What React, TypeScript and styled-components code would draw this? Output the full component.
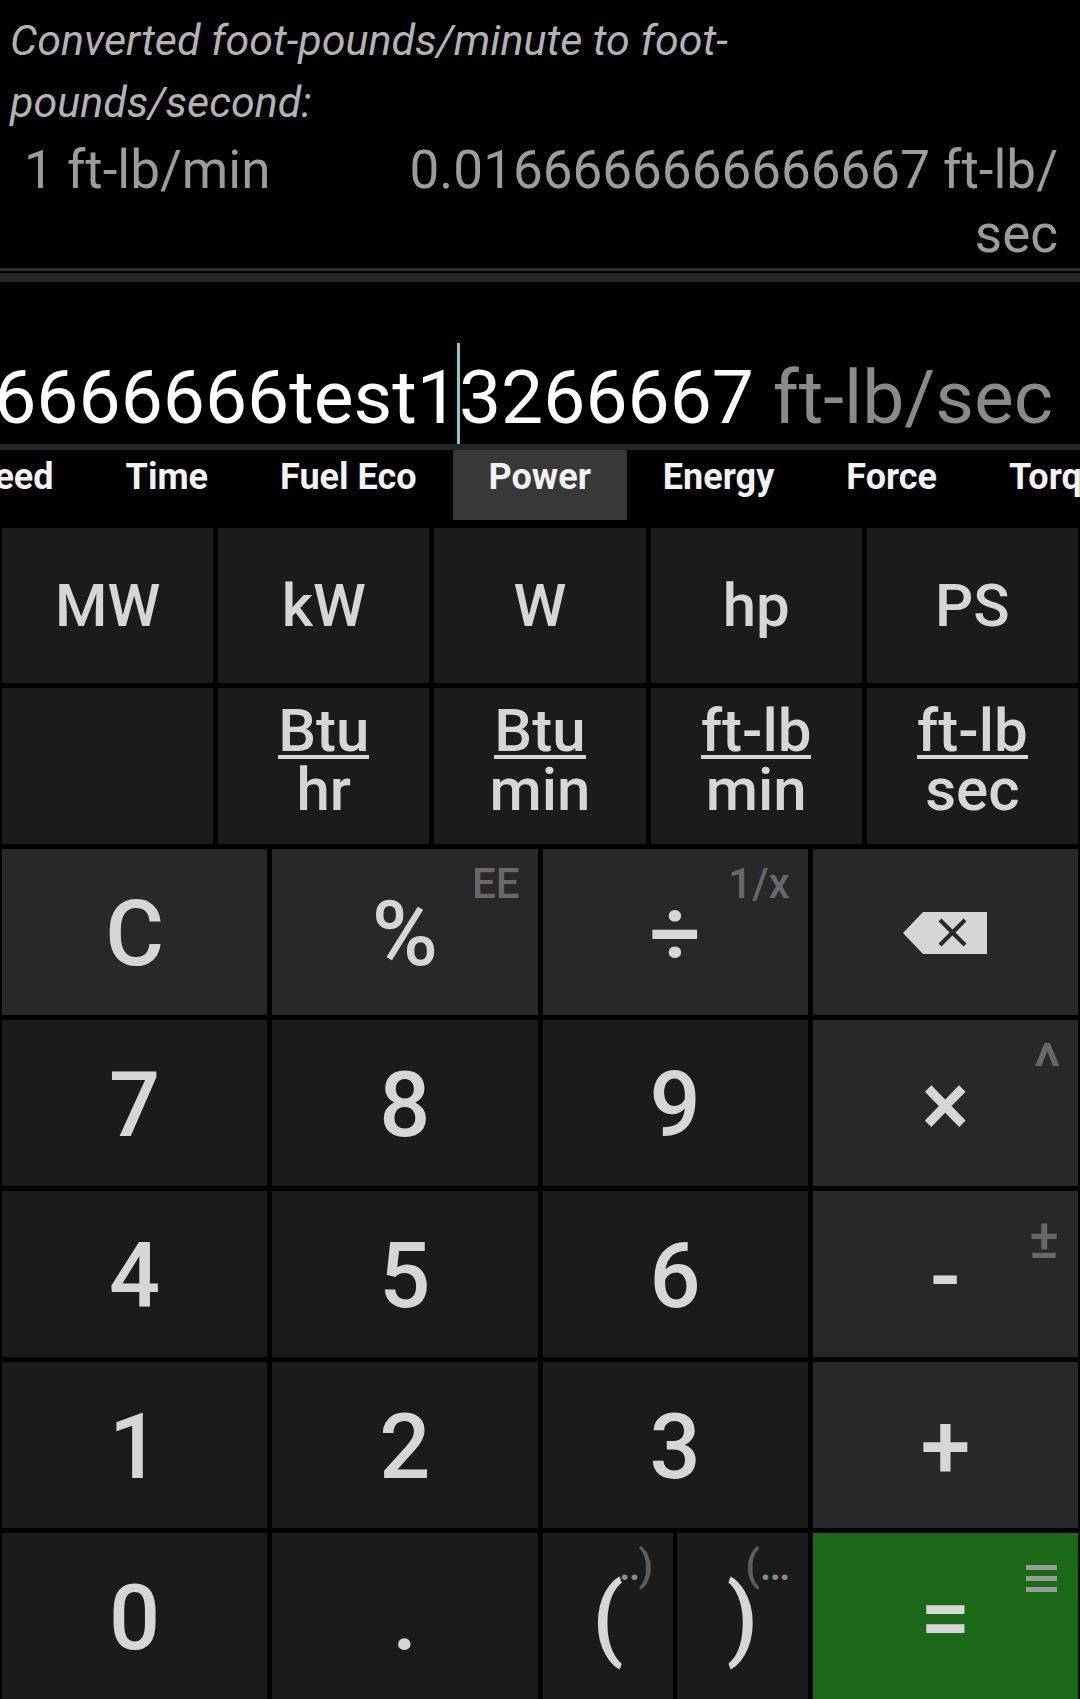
import React, { FC, ReactNode } from 'react'
import styled, { createGlobalStyle } from 'styled-components'

const GlobalStyle = createGlobalStyle`
  html, body {
    margin: 0;
    padding: 0;
    background: #000;
  }
  body {
    font-family: Roboto, "Liberation Sans", sans-serif;
  }
`

const Screen = styled.div`
  width: 1080px;
  height: 1699px;
  display: flex;
  flex-direction: column;
  background: #000;
  overflow: hidden;
`

const History = styled.div`
  padding: 9px 22px 0 10px;
  height: 266px;
  box-sizing: border-box;
`

const Title = styled.div`
  font-style: italic;
  font-size: 43px;
  line-height: 62px;
  color: #b3b3b3;
`

const ResultRow = styled.div`
  display: flex;
  margin-top: 5px;
  font-size: 53px;
  line-height: 64px;
  color: #9c9c9c;
`

const ResultFrom = styled.div`
  padding-left: 14px;
  white-space: nowrap;
`

const ResultTo = styled.div`
  flex: 1;
  text-align: right;
`

const ThinRule = styled.div`
  height: 3px;
  margin-top: 2px;
  background: #2c2c2c;
`

const ThickRule = styled.div<{ $h: number; $top?: number }>`
  height: ${p => p.$h}px;
  margin-top: ${p => p.$top ?? 0}px;
  background: #262626;
  flex-shrink: 0;
`

const InputRow = styled.div`
  height: 162px;
  display: flex;
  justify-content: flex-end;
  align-items: flex-end;
  padding-right: 27px;
  overflow: hidden;
  flex-shrink: 0;
`

const InputText = styled.div`
  flex-shrink: 0;
  white-space: nowrap;
  font-size: 75px;
  line-height: 1;
  color: #fff;
`

const Cursor = styled.span`
  display: inline-block;
  width: 3px;
  height: 101px;
  margin: 0 -1px 0 -2px;
  vertical-align: -21px;
  background: #80cbc4;
`

const InputUnit = styled.span`
  color: #8a8a8a;
`

const TabStrip = styled.div`
  height: 70px;
  overflow: hidden;
  flex-shrink: 0;
`

const TabTrack = styled.div`
  display: flex;
  margin-left: -84px;
`

const Tab = styled.div<{ $active?: boolean }>`
  flex-shrink: 0;
  height: 70px;
  box-sizing: border-box;
  padding: 0 36px 16px;
  line-height: 54px;
  font-size: 36px;
  font-weight: 700;
  color: #f2f2f2;
  white-space: nowrap;
  background: ${p => (p.$active ? '#383838' : 'transparent')};
`

const UnitGrid = styled.div`
  display: grid;
  grid-template-columns: repeat(5, 1fr);
  grid-template-rows: 155px 156px;
  gap: 5px;
  padding: 0 2px;
  margin-top: 8px;
`

const UnitCell = styled.div`
  display: flex;
  align-items: center;
  justify-content: center;
  background: #1b1b1b;
  color: #d6d6d6;
  font-size: 60px;
  font-weight: 500;
`

const Fraction = styled.div`
  display: flex;
  flex-direction: column;
  align-items: center;
  padding-bottom: 12px;
`

const Numerator = styled.span`
  line-height: 49px;
  border-bottom: 4px solid #d6d6d6;
`

const Denominator = styled.span`
  line-height: 49px;
  margin-top: 6px;
`

const Keypad = styled.div`
  display: grid;
  grid-template-columns: repeat(4, 1fr);
  grid-auto-rows: 166px;
  gap: 5px;
  padding: 0 2px;
  margin-top: 5px;
`

const keyBg = {
  digit: '#1b1b1b',
  op: '#282828',
  eq: '#1a6a18',
}

const Key = styled.div<{ $kind: keyof typeof keyBg }>`
  position: relative;
  display: flex;
  align-items: center;
  justify-content: center;
  padding-top: 6px;
  box-sizing: border-box;
  background: ${p => keyBg[p.$kind]};
  color: #d6d6d6;
  font-size: 90px;
  font-weight: 500;
  line-height: 1;

  & > svg {
    margin-top: -4px;
  }
`

const SplitKey = styled.div`
  display: grid;
  grid-template-columns: 1fr 1fr;
  gap: 4px;
`

const Alt = styled.span<{ $color?: string; $top?: number; $right?: number; $size?: number }>`
  position: absolute;
  top: ${p => p.$top ?? 14}px;
  right: ${p => p.$right ?? 18}px;
  font-size: ${p => p.$size ?? 42}px;
  font-weight: 500;
  line-height: 1;
  color: ${p => p.$color ?? '#686868'};

  svg {
    display: block;
  }
`

const Dots = styled.span`
  color: #8a8a8a;
  letter-spacing: -2px;
`

const Backspace: FC = () => (
  <svg width="84" height="42" viewBox="0 0 84 42">
    <path d="M0 21 L20 0 H84 V42 H20 Z" fill="#d6d6d6" />
    <path d="M37 8 L62 33 M62 8 L37 33" stroke="#282828" strokeWidth="4" />
  </svg>
)

const Menu: FC = () => (
  <svg width="31" height="27" viewBox="0 0 31 27">
    <rect x="0" y="0" width="31" height="5" fill="#9a9a9a" />
    <rect x="0" y="11" width="31" height="5" fill="#9a9a9a" />
    <rect x="0" y="22" width="31" height="5" fill="#9a9a9a" />
  </svg>
)

type KeyDef = {
  label: ReactNode
  kind: keyof typeof keyBg
  alt?: ReactNode
  altSize?: number
  altTop?: number
  altRight?: number
}

const rows: KeyDef[] = [
  { label: 'C', kind: 'op' },
  { label: '%', kind: 'op', alt: 'EE' },
  { label: '÷', kind: 'op', alt: '1/x' },
  { label: <Backspace />, kind: 'op' },
  { label: '7', kind: 'digit' },
  { label: '8', kind: 'digit' },
  { label: '9', kind: 'digit' },
  { label: '×', kind: 'op', alt: '^', altSize: 64, altTop: 16, altRight: 17 },
  { label: '4', kind: 'digit' },
  { label: '5', kind: 'digit' },
  { label: '6', kind: 'digit' },
  { label: '-', kind: 'op', alt: '±', altSize: 56, altTop: 20, altRight: 19 },
  { label: '1', kind: 'digit' },
  { label: '2', kind: 'digit' },
  { label: '3', kind: 'digit' },
  { label: '+', kind: 'op' },
  { label: '0', kind: 'digit' },
  { label: '.', kind: 'digit' },
]

const tabs = ['Speed', 'Time', 'Fuel Eco', 'Power', 'Energy', 'Force', 'Torque', 'Data']

const units: { top: string; bottom?: string }[] = [
  { top: 'MW' },
  { top: 'kW' },
  { top: 'W' },
  { top: 'hp' },
  { top: 'PS' },
  { top: '' },
  { top: 'Btu', bottom: 'hr' },
  { top: 'Btu', bottom: 'min' },
  { top: 'ft-lb', bottom: 'min' },
  { top: 'ft-lb', bottom: 'sec' },
]

const App: FC = () => {
  return (
    <Screen>
      <GlobalStyle />
      <History>
        <Title>
          Converted foot-pounds/minute to foot-
          <br />
          pounds/second:
        </Title>
        <ResultRow>
          <ResultFrom>1 ft-lb/min</ResultFrom>
          <ResultTo>
            0.0166666666666667 ft-lb/
            <br />
            sec
          </ResultTo>
        </ResultRow>
      </History>
      <ThinRule />
      <ThickRule $h={9} $top={2} />
      <InputRow>
        <InputText>
          0.01666666666666666666666test1
          <Cursor />
          3266667 <InputUnit>ft-lb/sec</InputUnit>
        </InputText>
      </InputRow>
      <ThickRule $h={6} />
      <TabStrip>
        <TabTrack>
          {tabs.map(t => (
            <Tab key={t} $active={t === 'Power'}>
              {t}
            </Tab>
          ))}
        </TabTrack>
      </TabStrip>
      <UnitGrid>
        {units.map((u, i) => (
          <UnitCell key={i}>
            {u.bottom ? (
              <Fraction>
                <Numerator>{u.top}</Numerator>
                <Denominator>{u.bottom}</Denominator>
              </Fraction>
            ) : (
              u.top
            )}
          </UnitCell>
        ))}
      </UnitGrid>
      <Keypad>
        {rows.map((k, i) => (
          <Key key={i} $kind={k.kind}>
            {k.label}
            {k.alt && (
              <Alt $size={k.altSize} $top={k.altTop} $right={k.altRight}>
                {k.alt}
              </Alt>
            )}
          </Key>
        ))}
        <SplitKey>
          <Key $kind="digit">
            (
            <Alt $color="#5e5e5e" $top={12} $right={20}>
              <Dots>..</Dots>)
            </Alt>
          </Key>
          <Key $kind="digit">
            )
            <Alt $color="#5e5e5e" $top={12} $right={19}>
              (<Dots>...</Dots>
            </Alt>
          </Key>
        </SplitKey>
        <Key $kind="eq">
          =
          <Alt $top={32} $right={21}>
            <Menu />
          </Alt>
        </Key>
      </Keypad>
    </Screen>
  )
}

export default App
